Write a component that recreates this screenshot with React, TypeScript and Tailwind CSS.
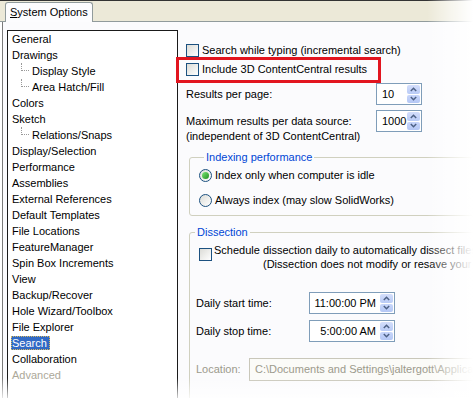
import React from "react";

const items: { t: string; c?: boolean; sel?: boolean; dis?: boolean }[] = [
  { t: "General" },
  { t: "Drawings" },
  { t: "Display Style", c: true },
  { t: "Area Hatch/Fill", c: true },
  { t: "Colors" },
  { t: "Sketch" },
  { t: "Relations/Snaps", c: true },
  { t: "Display/Selection" },
  { t: "Performance" },
  { t: "Assemblies" },
  { t: "External References" },
  { t: "Default Templates" },
  { t: "File Locations" },
  { t: "FeatureManager" },
  { t: "Spin Box Increments" },
  { t: "View" },
  { t: "Backup/Recover" },
  { t: "Hole Wizard/Toolbox" },
  { t: "File Explorer" },
  { t: "Search", sel: true },
  { t: "Collaboration" },
  { t: "Advanced", dis: true },
];

function Check() {
  return (
    <span className="w-[13px] h-[13px] shrink-0 border border-[#1c5180] bg-linear-to-br from-[#dcdcd7] to-white" />
  );
}

function Radio({ on }: { on?: boolean }) {
  return (
    <span className="w-[13px] h-[13px] shrink-0 rounded-full border border-[#1c5180] bg-linear-to-br from-[#dcdcd7] to-white flex items-center justify-center">
      {on && <span className="w-[7px] h-[7px] rounded-full bg-linear-to-br from-[#7be877] to-[#1b8f1b]" />}
    </span>
  );
}

function Spin({ value, w, right }: { value: string; w: string; right?: boolean }) {
  return (
    <div className={`${w} h-[22px] shrink-0 border border-[#7f9db9] bg-white flex items-stretch`}>
      <div className={`flex-1 flex items-center ${right ? "justify-end pr-[3px]" : "pl-[5px]"} text-black`}>
        {value}
      </div>
      <div className="w-[15px] flex flex-col gap-px p-px">
        <div className="flex-1 rounded-[2px] bg-linear-to-b from-[#d4defb] to-[#b9cbf6] flex items-center justify-center">
          <svg width="7" height="5" viewBox="0 0 7 5">
            <path d="M0.8 4 L3.5 1.3 L6.2 4" fill="none" stroke="#4d6185" strokeWidth="1.5" />
          </svg>
        </div>
        <div className="flex-1 rounded-[2px] bg-linear-to-b from-[#c8d6fa] to-[#b4c7f5] flex items-center justify-center">
          <svg width="7" height="5" viewBox="0 0 7 5">
            <path d="M0.8 1 L3.5 3.7 L6.2 1" fill="none" stroke="#4d6185" strokeWidth="1.5" />
          </svg>
        </div>
      </div>
    </div>
  );
}

export default function App() {
  return (
    <div className="relative w-[473px] h-[398px] overflow-hidden bg-white font-['Liberation_Sans',Arial,sans-serif] text-[11px] text-black">
      {/* tab strip */}
      <div className="h-[22px] bg-[#ece9d8] border-t border-[#333333] border-b border-b-[#919b9c] flex items-end">
        <div className="ml-[5px] h-[20px] -mb-px bg-[#fcfcfe] border border-b-0 border-[#919b9c] rounded-t-[3px] px-[4px] flex items-center">
          <span>
            <span className="underline">S</span>ystem Options
          </span>
        </div>
      </div>

      {/* content */}
      <div className="ml-[2px] border-l border-[#7a7a7a] bg-[#fbfbfd] h-[376px] flex items-start">
        {/* list box */}
        <div className="ml-[4px] mt-[8px] w-[171px] h-[380px] border border-[#1a1a1a] bg-white shrink-0">
          {items.map((it) => (
            <div key={it.t} className={`h-[16px] flex items-center ${it.c ? "pl-[13px]" : "pl-[4px]"}`}>
              {it.c && (
                <span className="self-start w-[8px] h-[8px] border-l border-b border-dotted border-[#9a9a9a] mr-[3px]" />
              )}
              {it.sel ? (
                <span className="-ml-px pl-px pr-[3px] leading-[14px] bg-[#316ac5] text-white outline outline-1 outline-dotted outline-[#d9b860] -outline-offset-1">
                  {it.t}
                </span>
              ) : (
                <span className={it.dis ? "text-[#aca899]" : ""}>{it.t}</span>
              )}
            </div>
          ))}
        </div>

        {/* right panel */}
        <div className="flex flex-col pl-[8px] whitespace-nowrap">
          <div className="mt-[22px] h-[13px] flex items-center gap-[3px]">
            <Check />
            <span>Search while typing (incremental search)</span>
          </div>
          <div className="mt-[6px] h-[13px] flex items-center gap-[3px]">
            <Check />
            <span>Include 3D ContentCentral results</span>
          </div>
          <div className="mt-[7px] h-[22px] flex items-center">
            <span className="w-[190px]">Results per page:</span>
            <Spin value="10" w="w-[46px]" />
          </div>
          <div className="mt-[5px] flex items-start">
            <div className="w-[190px] mt-[4px] leading-[15px]">
              <div>Maximum results per data source:</div>
              <div>(independent of 3D ContentCentral)</div>
            </div>
            <Spin value="1000" w="w-[46px]" />
          </div>

          {/* Indexing performance */}
          <fieldset className="mt-[6px] ml-[3px] w-[300px] border border-[#d0d0bf] rounded-[3px] pl-[9px] pb-[8px]">
            <legend className="ml-[5px] px-[2px] leading-[14px] text-[#0046d5]">Indexing performance</legend>
            <div className="mt-[5px] h-[13px] flex items-center gap-[3px]">
              <Radio on />
              <span>Index only when computer is idle</span>
            </div>
            <div className="mt-[12px] h-[13px] flex items-center gap-[3px]">
              <Radio />
              <span>Always index (may slow SolidWorks)</span>
            </div>
          </fieldset>

          {/* Dissection */}
          <fieldset className="mt-[9px] ml-[3px] w-[300px] h-[200px] border border-[#d0d0bf] rounded-[3px]">
            <legend className="ml-[5px] px-[2px] leading-[14px] text-[#0046d5]">Dissection</legend>
            <div className="mt-[4px] pl-[9px] flex items-start gap-[2px]">
              <span className="mt-[5px] flex">
                <Check />
              </span>
              <div className="leading-[14px]">
                <div>Schedule dissection daily to automatically dissect files</div>
                <div className="pl-[49px]">(Dissection does not modify or resave your files)</div>
              </div>
            </div>
            <div className="mt-[21px] pl-[6px] h-[22px] flex items-center">
              <span className="w-[113px]">Daily start time:</span>
              <Spin value="11:00:00 PM" w="w-[86px]" right />
            </div>
            <div className="mt-[6px] pl-[6px] h-[22px] flex items-center">
              <span className="w-[113px]">Daily stop time:</span>
              <Spin value="5:00:00 AM" w="w-[86px]" right />
            </div>
            <div className="mt-[16px] pl-[6px] h-[23px] flex items-center">
              <span className="w-[53px] text-[#9c9a8c]">Location:</span>
              <div className="w-[240px] h-[23px] border border-[#c9c7ba] bg-[#fbfbf8] flex items-center pl-[5px] text-[#9c9a8c]">
                C:\Documents and Settings\jaltergott\Application Data
              </div>
            </div>
          </fieldset>
        </div>
      </div>

      {/* red highlight annotation */}
      <div className="absolute left-[176px] top-[57px] w-[205px] h-[26px] border-[3px] border-[#e2151f]" />

      {/* fade overlays */}
      <div className="absolute right-0 top-0 bottom-0 w-[46px] bg-linear-to-r from-white/0 via-white/55 to-white pointer-events-none" />
      <div className="absolute left-0 right-0 bottom-0 h-[20px] bg-linear-to-b from-white/0 to-white/80 pointer-events-none" />
    </div>
  );
}
